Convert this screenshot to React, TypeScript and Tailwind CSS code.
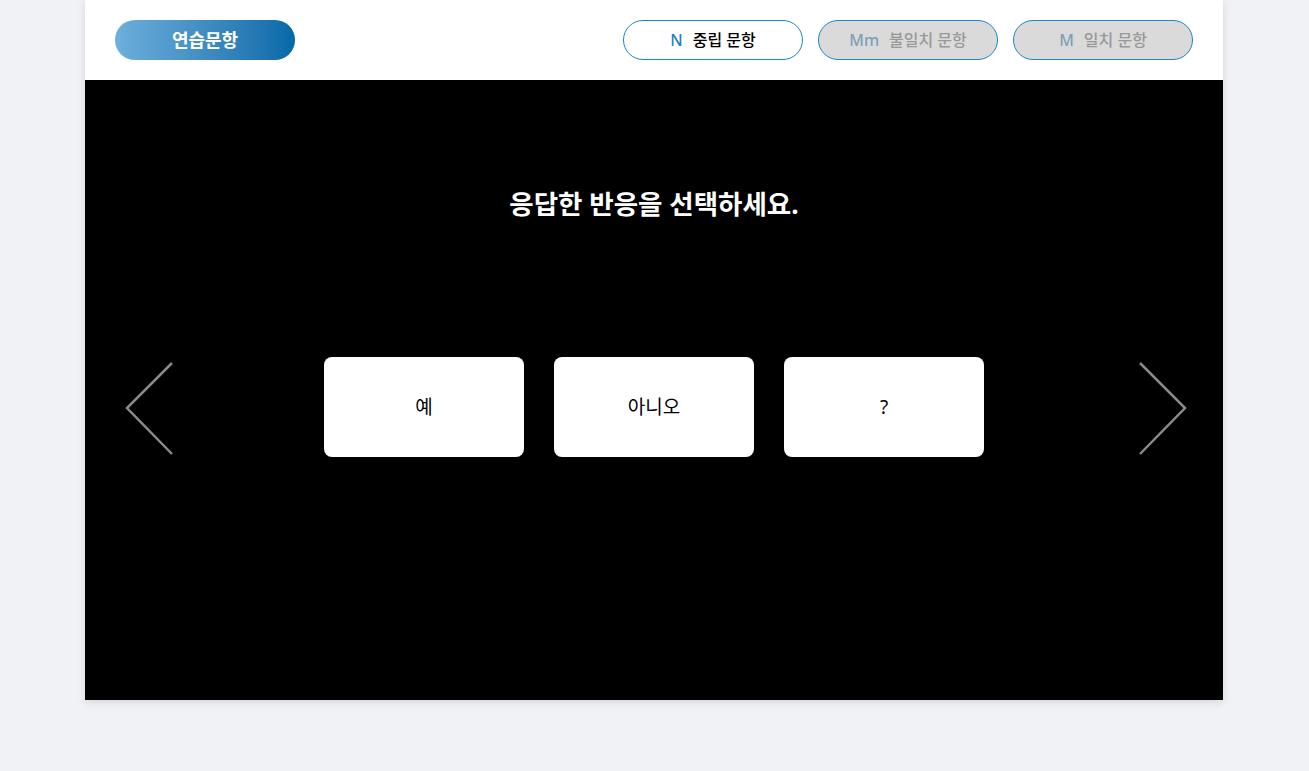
const modes = [
  { key: "N", label: "중립 문항", active: true },
  { key: "Mm", label: "불일치 문항", active: false },
  { key: "M", label: "일치 문항", active: false },
];

const choices = ["예", "아니오", "?"];

function Arrow({ dir }: { dir: "left" | "right" }) {
  return (
    <svg width="50" height="100" viewBox="0 0 50 100" fill="none">
      <polyline
        points={dir === "left" ? "47,6 2,51 47,97" : "3,6 48,51 3,97"}
        stroke="#8a8a8a"
        strokeWidth="2.5"
      />
    </svg>
  );
}

export default function App() {
  return (
    <div
      className="min-h-[771px] w-full bg-[#f1f2f6] pl-[85px]"
      style={{ fontFamily: '"Noto Sans", "Noto Sans CJK KR", sans-serif' }}
    >
      <div className="w-[1138px] bg-white shadow-[0_2px_8px_rgba(0,0,0,0.12)]">
        <header className="h-[80px] flex items-center justify-between px-[30px]">
          <div className="w-[180px] h-[40px] rounded-full bg-gradient-to-r from-[#6cb0db] to-[#0069a8] flex items-center justify-center text-white text-[18px] font-bold">
            연습문항
          </div>
          <div className="flex gap-[15px]">
            {modes.map((m) => (
              <button
                key={m.key}
                className={
                  m.active
                    ? "w-[180px] h-[40px] rounded-full border border-[#1a86c9] bg-white flex items-center justify-center gap-[10px] text-[16px] font-medium"
                    : "w-[180px] h-[40px] rounded-full border border-[#1a86c9] bg-[#dadada] flex items-center justify-center gap-[10px] text-[16px] font-medium"
                }
              >
                <span className={m.active ? "text-[#1a7fc0]" : "text-[#7d9fb6]"}>{m.key}</span>
                <span className={m.active ? "text-black" : "text-[#999999]"}>{m.label}</span>
              </button>
            ))}
          </div>
        </header>
        <main className="h-[620px] bg-black pt-[106px]">
          <h1 className="text-center text-white text-[26.5px] leading-[36px] font-bold">
            응답한 반응을 선택하세요.
          </h1>
          <div className="mt-[135px] flex items-center justify-between pl-[40px] pr-[36px]">
            <Arrow dir="left" />
            <div className="flex gap-[30px] mr-[4px]">
              {choices.map((c) => (
                <div
                  key={c}
                  className="w-[200px] h-[100px] rounded-[8px] bg-white flex items-center justify-center text-[19px] text-black"
                >
                  {c}
                </div>
              ))}
            </div>
            <Arrow dir="right" />
          </div>
        </main>
      </div>
    </div>
  );
}
